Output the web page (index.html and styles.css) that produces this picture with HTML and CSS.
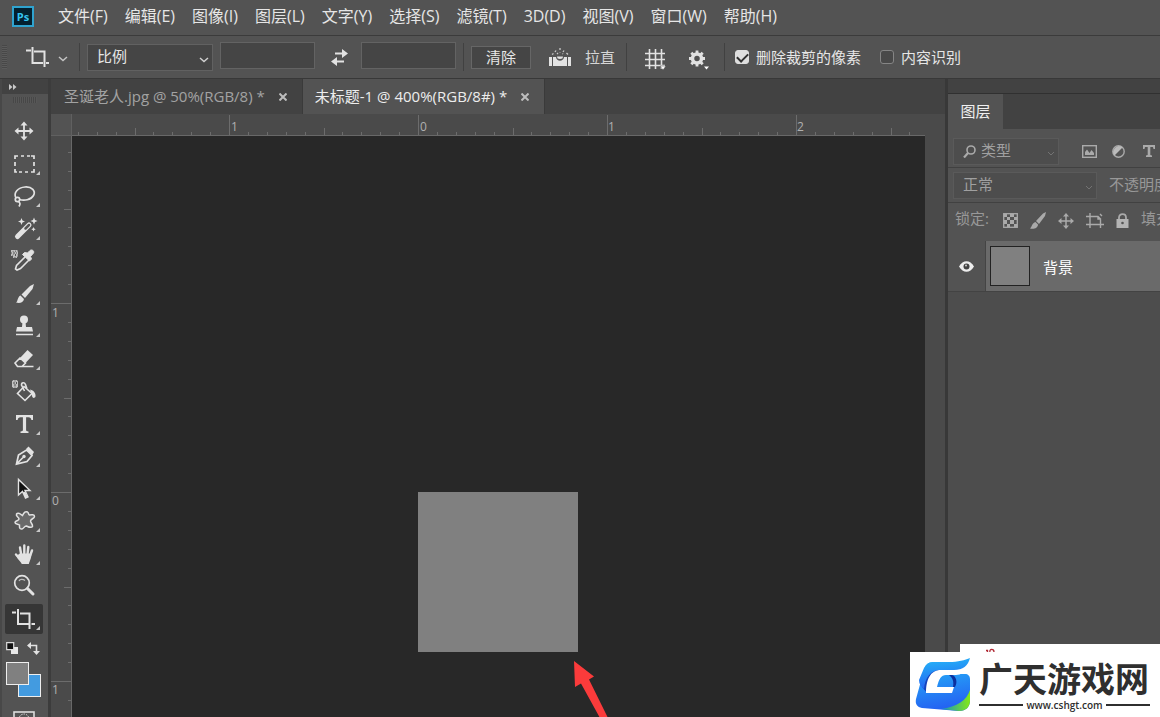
FILE: index.html
```html
<!DOCTYPE html>
<html lang="zh-CN">
<head>
<meta charset="utf-8">
<meta name="viewport" content="width=device-width, initial-scale=1">
<title>未标题-1</title>
<link rel="stylesheet" href="styles.css">
</head>
<body>
<header class="menubar">
  <svg class="app-logo" width="22" height="21" viewBox="0 0 22 21"><rect x="1" y="1" width="20" height="19" fill="#04202f" stroke="#2fa3cf" stroke-width="2"/><text x="11" y="15" text-anchor="middle" class="app-logo-text">Ps</text></svg>
  <nav class="menu">
    <a href="#">文件(F)</a><a href="#">编辑(E)</a><a href="#">图像(I)</a><a href="#">图层(L)</a><a href="#">文字(Y)</a><a href="#">选择(S)</a><a href="#">滤镜(T)</a><a href="#">3D(D)</a><a href="#">视图(V)</a><a href="#">窗口(W)</a><a href="#">帮助(H)</a>
  </nav>
</header>

<section class="options">
  <span class="grip"></span>
  <button class="opt-tool" aria-label="裁剪工具">
    <svg width="42" height="24" viewBox="0 0 42 24"><g fill="none" stroke="#e2e2e2" stroke-width="2"><path d="M0 5.500H5M6.500 2V18H17M8 6.500H18.500V22M20 18H23"/></g><path d="M33 12l4 3.500 4-3.500" fill="none" stroke="#c4c4c4" stroke-width="1.500"/></svg>
  </button>
  <span class="divider"></span>
  <span class="select ratio"><select aria-label="比例"><option>比例</option></select>
    <svg class="chevron" width="10" height="6" viewBox="0 0 10 6"><path d="M1 1l4 3.500L9 1" fill="none" stroke="#d0d0d0" stroke-width="1.500"/></svg></span>
  <input class="field" type="text" aria-label="宽度">
  <button class="swap" aria-label="互换"><svg width="17" height="17" viewBox="0 0 17 17"><g fill="#e2e2e2"><path d="M4 3.500h7V0l6 4.500L11 9V5.500H4z"/><path d="M13 11.500H6V8l-6 4.500L6 17v-3.500h7z"/></g></svg></button>
  <input class="field" type="text" aria-label="高度">
  <span class="divider"></span>
  <button class="clear">清除</button>
  <button class="straighten"><svg width="22" height="19" viewBox="0 0 22 19"><path d="M0 9h3v9H0zM19 9h3v9h-3zM4 9h3c.5 5 7.500 5 8 0h3v9H4z" fill="#e2e2e2"/><path d="M8 8.500a3 2.500 0 0 0 6 0z" fill="#e2e2e2"/><path d="M3 6.500L4.500 5.500M6 4l1-1.500M11 2V0M15 2.500l-1 1.500M17.500 5L19 6.500M8 6l1-1M11 4.500V5M13.500 5.500l.5.500" stroke="#c9c9c9" stroke-width="1.300"/></svg><span>拉直</span></button>
  <span class="divider"></span>
  <button class="icon" aria-label="叠加选项"><svg width="21" height="22" viewBox="0 0 21 22"><path d="M4.500 0V20M10.500 0V20M16.500 0V20M0 4.500H20M0 10.500H20M0 16.500H20" stroke="#e2e2e2" stroke-width="1.600"/><path d="M15 17h6l-3 4z" fill="#fff" stroke="#444" stroke-width=".5"/></svg></button>
  <button class="icon gear" aria-label="设置"><svg width="20" height="20" viewBox="0 0 20 20"><circle cx="8" cy="8.500" r="4.500" fill="none" stroke="#e2e2e2" stroke-width="3.500"/><path d="M8 .5v3M8 13.500v3M0 8.500h3M13 8.500h3M2.300 2.800l2 2M11.700 12.200l2 2M2.300 14.200l2-2M11.700 4.800l2-2" stroke="#e2e2e2" stroke-width="2.800"/><path d="M15 16.500h5l-2.500 3z" fill="#fff"/></svg></button>
  <span class="divider"></span>
  <label class="check"><input type="checkbox" checked><span>删除裁剪的像素</span></label>
  <label class="check"><input type="checkbox"><span>内容识别</span></label>
</section>

<main class="workspace">
  <aside class="toolbox">
    <button class="expand" aria-label="展开"><svg width="8" height="6" viewBox="0 0 8 6"><path d="M0 0l3.500 3L0 6zM4 0l3.500 3L4 6z" fill="#c9c9c9"/></svg></button>
    <div class="tool-grip"></div>
    <div class="tools">
      <button aria-label="移动"><svg viewBox="0 0 38 30"><path d="M19 8v14M12 15h14" stroke="#e2e2e2" stroke-width="1.800"/><path d="M19 5.500l3.500 4h-7zM19 24.500l3.500-4h-7zM9.500 15l4-3.500v7zM28.500 15l-4-3.500v7z" fill="#e2e2e2"/></svg></button>
      <button aria-label="矩形选框"><svg viewBox="0 0 38 30"><path d="M10 10V7h3M16 7h3M22 7h3M26 7h3v3M29 13v4M29 20v3h-3M23 23h-3M17 23h-3M12 23h-2v-3M10 17v-4" fill="none" stroke="#e2e2e2" stroke-width="1.700"/><path class="more" d="M35 22v4h-4z"/></svg></button>
      <button aria-label="套索"><svg viewBox="0 0 38 30"><g fill="none" stroke="#e2e2e2" stroke-width="1.700"><path d="M11 17C8 12 13 6.500 20 6c7-.5 11 4 8.500 8.500C26 19 19 20 14.500 18.500"/><circle cx="12.500" cy="18.500" r="2.200"/><path d="M13 20.500c3 1 2 3 1 5"/></g><path class="more" d="M35 22v4h-4z"/></svg></button>
      <button aria-label="魔棒"><svg viewBox="0 0 38 30"><path d="M12.500 22.500L24 11" stroke="#e2e2e2" stroke-width="5" stroke-linecap="round"/><path d="M20.500 14.500L24 11" stroke="#555" stroke-width="2.500" stroke-linecap="round"/><path d="M16.500 4l1 2.500 2.500 1-2.500 1-1 2.500-1-2.500-2.500-1 2.500-1zM29 3.500l1 2.500 2.500 1-2.500 1-1 2.500-1-2.500-2.500-1 2.500-1zM28.500 13l.7 1.500 1.500.7-1.500.7-.7 1.500-.7-1.500-1.500-.7 1.500-.7z" fill="#e2e2e2"/><path class="more" d="M35 22v4h-4z"/></svg></button>
      <button aria-label="吸管"><svg viewBox="0 0 38 30"><path d="M20 11l-8.500 8.500-1 3.500 1.500 1 3.500-1.500L24 14" fill="none" stroke="#e2e2e2" stroke-width="1.600"/><path d="M17.500 8.500l2-2 3 .5L25 4.500c2-1.500 4.500.5 3.500 2.500l-3 3.500 1 2.500-2 2z" fill="#e2e2e2" stroke="#e2e2e2"/><path class="checker" d="M6 5h7M7 7h6M6 9h7M8 11h5"/><path d="M7 4.500l5 .5v6l-3-.5-2-3z" class="checker-edge"/></svg></button>
      <button aria-label="画笔"><svg viewBox="0 0 38 30"><path d="M29 5l-1.500 5-7.500 9-3.500-3.500L25 7z" fill="#e2e2e2"/><path d="M15.500 16.500l3.500 3.500c-.5 4-5 4.500-8 3.500 2-1 1.500-6 4.500-7z" fill="#e2e2e2"/><path class="more" d="M35 22v4h-4z"/></svg></button>
      <button aria-label="仿制图章"><svg viewBox="0 0 38 30"><circle cx="19" cy="8.500" r="4" fill="#e2e2e2"/><path d="M17.500 11h3l.5 5h6l1 4.500H11l1-4.500h5z" fill="#e2e2e2"/><path d="M11 23.500h17" stroke="#e2e2e2" stroke-width="1.500"/><path class="more" d="M35 22v4h-4z"/></svg></button>
      <button aria-label="橡皮擦"><svg viewBox="0 0 38 30"><path d="M15 14l7.500-8 5.500 5-7.500 8z" fill="#e2e2e2"/><path d="M15 14l-5 5 2.500 3.500H17l3.500-3.500zM17 22.500h11.500" fill="none" stroke="#e2e2e2" stroke-width="1.600"/><path class="more" d="M35 22v4h-4z"/></svg></button>
      <button aria-label="油漆桶"><svg viewBox="0 0 38 30"><path d="M19 10.500l8 7-7 7-7.500-7zM19.500 15l-3-6c0-3 3-3 4-.5l1.500 4.500" fill="none" stroke="#e2e2e2" stroke-width="1.600"/><path d="M25 13.500c4 1 6 4 5.500 7-1 2.500-3.500 1.500-3.500-1z" fill="#e2e2e2"/><path class="checker" d="M8 5h5M7 7h6M8 9h5M8 11h5"/><path d="M7.500 5h5v6h-5z" class="checker-edge"/></svg></button>
      <button aria-label="文字"><svg viewBox="0 0 38 30"><path d="M11 6h17v5h-1.600c-.4-2-1-2.800-3-2.800h-2.300v12.600c0 1.300.5 1.500 2.400 1.700V24h-8v-1.500c1.900-.2 2.400-.4 2.400-1.700V8.200h-2.300c-2 0-2.600.8-3 2.800H11z" fill="#e2e2e2"/><path class="more" d="M35 22v4h-4z"/></svg></button>
      <button aria-label="钢笔"><svg viewBox="0 0 38 30"><path d="M11.500 23l2-9 8-5 5.500 5.500-5 6zM12 22.500l6-6" fill="none" stroke="#e2e2e2" stroke-width="1.700"/><circle cx="19" cy="15.500" r="1.700" fill="#e2e2e2"/><path d="M21 8l2.500-2.500L29 11l-2 3.500z" fill="#e2e2e2"/><path class="more" d="M35 22v4h-4z"/></svg></button>
      <button aria-label="路径选择"><svg viewBox="0 0 38 30"><path d="M13.500 5.500v15.500l4-3.500 3 6.500 2.500-1.200-3-6.300h5z" fill="#111" stroke="#e2e2e2" stroke-width="1.400"/><path d="M19 18l2.500 5" stroke="#e2e2e2" stroke-width="2.500"/><path class="more" d="M35 22v4h-4z"/></svg></button>
      <button aria-label="自定形状"><svg viewBox="0 0 38 30"><path d="M17.500 9.500C19 6 20.500 5 22.500 6c1.500 1 .5 2.500 2 3 2-.5 5-.5 5 1.500s-4 2.500-4 4.500 2.500 3 2 5.500c-1.500 2-4 .5-6-.5-2-.5-2.500 2.500-4.500 3-3 .5-2.500-2.500-2.500-4-1.500-1-4.500-.5-4.500-2.500s4-1.500 4-3.500-3.500-2.500-2.500-5c1.500-2 4 0 6 1.500z" fill="#6a6a6a" stroke="#e2e2e2" stroke-width="1.500"/><path class="more" d="M35 22v4h-4z"/></svg></button>
      <button aria-label="抓手"><svg viewBox="0 0 38 30"><path d="M16.300 16L15 8.500M19.300 15V6.500M22.500 15.500l.8-7.500M25 17l2-5.500M14.500 19.500L11 15.500" stroke="#e2e2e2" stroke-width="2.400" stroke-linecap="round"/><path d="M14.800 14.500h9.500l2 .5c0 5-1.500 6.500-2.500 10h-7c-1-2.500-4-4.500-5.500-8z" fill="#e2e2e2"/><path class="more" d="M35 22v4h-4z"/></svg></button>
      <button aria-label="缩放"><svg viewBox="0 0 38 30"><circle cx="17" cy="12" r="7.300" fill="none" stroke="#e2e2e2" stroke-width="1.700"/><path d="M14 10c1-2 4-2 6-.5" fill="none" stroke="#bbb" stroke-width="1.300"/><path d="M22.500 17.500l5.500 5.500" stroke="#e2e2e2" stroke-width="3" stroke-linecap="round"/></svg></button>
      <button class="active" aria-label="裁剪"><svg viewBox="0 0 38 30"><path d="M7 8.500h4M13 5v15h11M15 9.500h9.500V25M26.500 20H30" fill="none" stroke="#e2e2e2" stroke-width="2"/><path class="more" d="M35 22v4h-4z"/></svg></button>
    </div>
    <div class="color-actions">
      <button aria-label="默认颜色"><svg width="13" height="13" viewBox="0 0 13 13"><path d="M5 5h7v7H5z" fill="#e8e8e8"/><path d="M.7.7h7v7h-7z" fill="#111" stroke="#ddd" stroke-width="1.200"/></svg></button>
      <button aria-label="切换颜色"><svg width="13" height="13" viewBox="0 0 13 13"><path d="M3 3.500h6.500V9" fill="none" stroke="#e2e2e2" stroke-width="1.600"/><path d="M0 3.500L4 0v7zM9.500 13L6 9h7z" fill="#e2e2e2"/></svg></button>
    </div>
    <div class="swatches"><button class="swatch back" aria-label="背景色"></button><button class="swatch front" aria-label="前景色"></button></div>
    <button class="quickmask" aria-label="快速蒙版"><svg width="22" height="14" viewBox="0 0 22 14"><rect x="1" y="1" width="20" height="16" fill="none" stroke="#ddd" stroke-width="1.600"/><circle cx="11" cy="8" r="5" fill="none" stroke="#ddd" stroke-dasharray="1.500 1"/></svg></button>
  </aside>

  <section class="document">
    <div class="tabs">
      <div class="tab"><span>圣诞老人.jpg @ 50%(RGB/8) *</span><button aria-label="关闭"><svg width="8" height="8" viewBox="0 0 8 8"><path d="M.5.5l7 7M7.500.5l-7 7"/></svg></button></div>
      <div class="tab current"><span>未标题-1 @ 400%(RGB/8#) *</span><button aria-label="关闭"><svg width="8" height="8" viewBox="0 0 8 8"><path d="M.5.5l7 7M7.500.5l-7 7"/></svg></button></div>
    </div>
    <div class="stage">
      <div class="corner"></div>
      <svg class="ruler-top" width="100%" height="22">
        <defs><pattern id="tx" x="157" y="0" width="189" height="22" patternUnits="userSpaceOnUse"><path d="M.5 1V22M19.500 18V22M38.500 18V22M57.500 18V22M76.500 18V22M95.500 14V22M113.500 18V22M132.500 18V22M151.500 18V22M170.500 18V22" stroke="#6c6c6c"/></pattern></defs>
        <rect width="100%" height="22" fill="url(#tx)"/>
        <text x="159" y="17">1</text><text x="348" y="17">0</text><text x="536" y="17">1</text><text x="725" y="17">2</text>
      </svg>
      <div class="gutter-top"></div>
      <svg class="ruler-left" width="21" height="100%">
        <defs><pattern id="ty" x="0" y="167" width="21" height="189" patternUnits="userSpaceOnUse"><path d="M0 .5H21M17 19.500H21M17 38.500H21M17 57.500H21M17 76.500H21M13 95.500H21M17 113.500H21M17 132.500H21M17 151.500H21M17 170.500H21" stroke="#6c6c6c"/></pattern></defs>
        <rect width="21" height="100%" fill="url(#ty)"/>
        <text x="1" y="181">1</text><text x="1" y="369">0</text><text x="1" y="558">1</text>
      </svg>
      <div class="canvas">
        <div class="artboard"></div>
        <svg class="pointer" width="36" height="57" viewBox="0 0 36 57"><path d="M0 0l20 15.500-5 3L34 57h-8L7 22.500 1 26z" fill="#fb3b3b"/></svg>
      </div>
      <div class="gutter"></div>
    </div>
  </section>

  <aside class="panel">
    <div class="panel-top"></div>
    <div class="panel-tabs"><button class="panel-tab">图层</button></div>
    <div class="row filter">
      <span class="select kind"><svg class="search" width="13" height="13" viewBox="0 0 13 13"><circle cx="8" cy="5" r="4" fill="none" stroke="#aaa" stroke-width="1.600"/><path d="M5 8l-4 4.500" stroke="#aaa" stroke-width="2.200"/></svg><select aria-label="类型"><option>类型</option></select>
        <svg class="chevron" width="8" height="5" viewBox="0 0 8 5"><path d="M1 1l3 3 3-3" fill="none" stroke="#737373"/></svg></span>
      <button aria-label="像素图层"><svg width="15" height="13" viewBox="0 0 15 13"><rect x=".7" y=".7" width="13.600" height="11.600" fill="none" stroke="#aaa" stroke-width="1.400"/><path d="M3 10V7l2-2.500L7.500 8 9.500 5 12 8v2z" fill="#aaa"/></svg></button>
      <button aria-label="调整图层"><svg width="13" height="13" viewBox="0 0 13 13"><circle cx="6.500" cy="6.500" r="5.700" fill="none" stroke="#aaa" stroke-width="1.400"/><path d="M10.500 2.500a5.700 5.700 0 0 0-8 8z" fill="#bbb"/></svg></button>
      <button aria-label="文字图层"><svg width="12" height="12" viewBox="0 0 12 12"><path d="M0 0h12v4h-1.500L10 2H7.300v8l1.700.5V12H3v-1.500l1.700-.5V2H2l-.5 2H0z" fill="#aaa"/></svg></button>
    </div>
    <div class="row blend">
      <span class="select mode"><select aria-label="混合模式"><option>正常</option></select>
        <svg class="chevron" width="8" height="5" viewBox="0 0 8 5"><path d="M1 1l3 3 3-3" fill="none" stroke="#737373"/></svg></span>
      <span class="dim">不透明度</span>
    </div>
    <div class="row lock">
      <span class="dim">锁定:</span>
      <div class="locks">
      <button aria-label="锁定透明像素"><svg width="15" height="15" viewBox="0 0 15 15"><rect x=".7" y=".7" width="13.600" height="13.600" fill="none" stroke="#aaa" stroke-width="1.300"/><path d="M1 1h3v3H1zM7 1h4v3H7zM4 4h3v3H4zM11 4h3v3h-3zM1 7h3v4H1zM7 7h4v4H7zM4 11h3v3H4zM11 11h3v3h-3z" fill="#aaa"/></svg></button>
      <button aria-label="锁定图像像素"><svg width="16" height="17" viewBox="0 0 16 17"><path d="M16 0l-1 4-6 8-3-3 7-7.500zM5.500 10L8 12.500C8 16 4 17.500 0 16.500 2 15 2 11 5.500 10z" fill="#aaa"/></svg></button>
      <button aria-label="锁定位置"><svg width="16" height="16" viewBox="0 0 16 16"><path d="M8 2v12M2 8h12" stroke="#aaa" stroke-width="1.500"/><path d="M8 0l3 3.500H5zM8 16l3-3.500H5zM0 8l3.500-3v6zM16 8l-3.500-3v6z" fill="#aaa"/></svg></button>
      <button aria-label="锁定画板"><svg width="18" height="15" viewBox="0 0 18 15"><path d="M0 3.500h12l3 3M4 0v15M0 11.500h18M14.500 6v9M12 3.500V6h2.500M14 1l2 2" fill="none" stroke="#aaa" stroke-width="1.400"/></svg></button>
      <button aria-label="锁定全部"><svg width="13" height="15" viewBox="0 0 13 15"><path d="M3 7V4.500C3 0 10 0 10 4.500V7" fill="none" stroke="#aaa" stroke-width="1.800"/><path d="M.5 6h12v9H.5z" fill="#b4b4b4"/><circle cx="6.500" cy="10" r="1.300" fill="#555"/></svg></button>
      </div>
      <span class="dim">填充</span>
    </div>
    <div class="layer">
      <button class="eye" aria-label="可见性"><svg width="15" height="11" viewBox="0 0 15 11"><path d="M0 5.500C4-1.500 11-1.500 15 5.500 11 12.500 4 12.500 0 5.500z" fill="#eee"/><circle cx="7.500" cy="5.500" r="3" fill="#444"/><circle cx="7" cy="4.500" r="1" fill="#ccc"/></svg></button>
      <div class="layer-body"><span class="thumb"></span><span>背景</span></div>
    </div>
  </aside>
</main>

<footer class="watermark">
  <svg class="brand-strip" viewBox="0 0 200 8" width="200" height="8"><path d="M0 0h200v8H0z" fill="#fff"/><path d="M26 6.500h1.500V8M30 8C29 4.500 34 4.500 34 8" fill="none" stroke="#b02a35" stroke-width="1.300"/></svg>
  <svg class="brand-mark" width="57" height="55" viewBox="0 0 57 55">
    <defs><linearGradient id="bl" x1="0" y1="0" x2="0.200" y2="1"><stop offset="0" stop-color="#25baf8"/><stop offset="1" stop-color="#2463f2"/></linearGradient><linearGradient id="gr" x1="0" y1="0" x2="1" y2="0"><stop offset="0" stop-color="#1591c4"/><stop offset="1" stop-color="#84ea14"/></linearGradient></defs>
    <path d="M25 5h-6c-5 0-8 3-9 8L2 42c-1 5 1 8 6 9l37 3c7 0 11-4 11-11V22c0-3-2-5-5-5H34z" fill="url(#bl)"/>
    <path d="M56 33c-3 10-13 17-29 19l18 2c7 0 11-4 11-11z" fill="url(#gr)"/>
    <path d="M31 6C19 6 8 15 8 30l5 6c1-13 4-20 14-23z" fill="#1443bd"/>
    <path d="M19 5h16c9 0 16-2 21-4-2 8-7 12-16 12H27C17 13 11 20 10 32 7 30 5 27 5 23l5-12c2-4 5-6 9-6z" fill="url(#bl)"/>
    <path d="M27 13h16c5 0 8-1 10-3-2 5-6 8-11 8H32c-5 0-7 4-9 12h17l-2 6H12c0-13 4-23 15-23z" fill="#fff"/>
    <path d="M35 18c4 3 5 7 4 12h2c3-5 1-11-3-12z" fill="#0a2f9e"/>
  </svg>
  <div class="brand"><strong>广天游戏网</strong><span class="url">www.cshgt.com</span></div>
</footer>
</body>
</html>
```
FILE: styles.css
```css
* { box-sizing: border-box; }
body {
  margin: 0;
  height: 100vh;
  display: flex;
  flex-direction: column;
  overflow: hidden;
  position: relative;
  background: #535353;
  color: #e6e6e6;
  font-family: "Open Sans", "Noto Sans CJK SC", sans-serif;
  font-size: 16px;
}
button, input, select { font: inherit; color: inherit; }
button { padding: 0; border: 0; background: none; display: flex; align-items: center; justify-content: center; }
svg { display: block; flex: none; }

.menubar { flex: none; height: 36px; display: flex; align-items: center; padding: 0 12px 3px; gap: 24px; border-bottom: 1px solid #3b3b3b; }
.app-logo-text { font: bold 11px "Open Sans", sans-serif; fill: #35c4f0; }
.menu { display: flex; gap: 17px; white-space: nowrap; }
.menu a { color: inherit; text-decoration: none; line-height: 24px; }

.options { flex: none; height: 43px; display: flex; align-items: center; white-space: nowrap; font-size: 15px; border-bottom: 1px solid #383838; }
.grip { width: 5px; height: 24px; margin: 0 19px 0 2px; background: repeating-linear-gradient(#484848 0 1px, #5b5b5b 1px 2px); }
.divider { flex: none; width: 1px; height: 28px; background: #414141; }
.opt-tool { margin-right: 11px; }
.select { position: relative; display: flex; align-items: center; border: 1px solid #616161; background: #454545; }
.select select { appearance: none; width: 100%; height: 100%; padding: 0 0 2px 9px; border: 0; background: transparent; }
.chevron { position: absolute; right: 3px; top: 50%; pointer-events: none; }
.ratio { width: 126px; height: 27px; margin: 0 7px; }
.field { width: 95px; height: 27px; border: 1px solid #636363; background: #454545; margin-bottom: 3px; }
.swap { margin: 0 13px 0 16px; }
.field + .divider { margin: 0 7px; }
.clear { width: 60px; height: 23px; padding-bottom: 2px; border: 1px solid #666; background: #454545; }
.straighten { gap: 14px; margin: 0 11px 0 18px; color: #d6d6d6; }
.straighten span, .check span { padding-bottom: 2px; }
.icon { margin: 6px 0 0 18px; }
.gear { margin: 6px 15px 0 23px; }
.check { display: flex; align-items: center; gap: 7px; margin-left: 10px; }
.check + .check { margin-left: 19px; }
.check input { appearance: none; width: 14px; height: 14px; margin: 0; border: 1px solid #858585; border-radius: 3px; background: #494949; }
.check input:checked { border-color: #dedede; background: #dedede; display: grid; place-items: center; }
.check input:checked::before { content: ""; width: 9px; height: 5px; border: solid #303030; border-width: 0 0 2px 2px; transform: translateY(-1px) rotate(-45deg); }

.workspace { flex: 1; min-height: 0; display: flex; }
.toolbox { flex: none; width: 51px; display: flex; flex-direction: column; border-left: 2px solid #484848; border-right: 3px solid #3c3c3c; overflow: hidden; }
.expand { flex: none; height: 15px; justify-content: flex-start; padding-left: 7px; background: #424242; }
.tool-grip { flex: none; width: 24px; height: 6px; margin: 3px 11px 11px; background: repeating-linear-gradient(90deg, #474747 0 1px, #575757 1px 2px); }
.tools { flex: none; height: 521px; display: flex; flex-direction: column; justify-content: space-between; padding: 2px 3px 1px; }
.tools button { width: 38px; height: 30px; border-radius: 2px; }
.tools svg { width: 38px; height: 30px; }
.tools .active { background: #363636; }
.more { fill: #c8c8c8; }
.checker { stroke: #e2e2e2; stroke-width: 1.500; stroke-dasharray: 1.500 1; fill: none; }
.checker-edge { stroke: #c4c4c4; fill: none; }
.color-actions { flex: none; display: flex; gap: 8px; padding: 7px 4px 0; }
.swatches { flex: none; display: grid; grid-template-columns: 12px 11px 12px; grid-template-rows: 12px 11px 12px; margin: 7px 4px 0; }
.swatch { border: 1px solid #eee; }
.back { grid-area: 2 / 2 / 4 / 4; background: #439be0; }
.front { grid-area: 1 / 1 / 3 / 3; background: #808080; }
.quickmask { flex: none; margin: 14px 11px 0; width: 22px; }

.document { flex: 1; min-width: 0; display: flex; flex-direction: column; }
.tabs { flex: none; height: 35px; display: flex; background: #424242; white-space: nowrap; font-size: 15px; }
.tab { display: flex; align-items: center; gap: 14px; padding: 0 15px 0 13px; color: #a2a2a2; border-right: 1px solid #3a3a3a; }
.tab span { padding-bottom: 2px; }
.tab svg { stroke: #bdbdbd; stroke-width: 2; }
.current { padding-left: 12px; background: #535353; color: #ededed; }
.stage { flex: 1; min-height: 0; display: grid; grid-template-columns: 21px minmax(0, 1fr) 20px; grid-template-rows: 22px minmax(0, 1fr); background: #4a4a4a; }
.stage text { font-size: 12px; fill: #b0b0b0; }
.corner { background: #535353; border: 1px solid #606060; border-width: 0 1px 1px 0; }
.ruler-top, .ruler-left { overflow: hidden; }
.ruler-top { border-bottom: 1px solid #686868; }
.ruler-left { border-right: 1px solid #686868; }
.canvas { position: relative; overflow: hidden; background: #282828; }
.artboard { position: absolute; left: 346px; top: 356px; width: 160px; height: 160px; background: #808080; }
.pointer { position: absolute; left: 502px; top: 525px; }

.panel { flex: none; width: 215px; display: flex; flex-direction: column; overflow: hidden; white-space: nowrap; border-left: 3px solid #383838; background: #4d4d4d; font-size: 15px; }
.panel-top { flex: none; height: 15px; background: #424242; border-bottom: 1px solid #303030; }
.panel-tabs { flex: none; height: 35px; display: flex; background: #424242; }
.panel-tab { width: 55px; padding-bottom: 2px; background: #535353; color: #f0f0f0; }
.row { flex: none; display: flex; align-items: center; padding-left: 5px; background: #535353; border-bottom: 1px solid #414141; color: #a0a0a0; }
.row > * { flex: none; }
.row .select { border-color: #5a5a5a; background: #4d4d4d; }
.filter { height: 39px; padding-top: 6px; gap: 15px; }
.kind { width: 106px; height: 27px; padding-left: 9px; margin-right: 8px; }
.filter button + button + button { margin-left: 3px; }
.kind select { padding-left: 5px; }
.blend { height: 35px; gap: 12px; }
.mode { width: 144px; height: 27px; }
.dim { padding-bottom: 3px; color: #989898; }
.lock { height: 38px; padding: 0 0 6px 7px; border-bottom: 0; }
.locks { display: flex; align-items: center; gap: 12px; margin: 3px 12px 0 14px; }
.layer { flex: none; height: 51px; display: flex; border-bottom: 1px solid #434343; }
.eye { width: 38px; border-right: 1px solid #444; background: #535353; }
.layer-body { flex: 1; display: flex; align-items: center; gap: 13px; padding-left: 4px; background: #6a6a6a; color: #fff; }
.thumb { width: 40px; height: 40px; border: 1px solid #222; background: #808080; }

.watermark { position: absolute; right: 0; bottom: 0; width: 250px; height: 65px; display: flex; gap: 8px; padding: 5px 10px 0 4px; background: #fff; color: #2f2f2f; }
.brand-strip { position: absolute; right: 0; bottom: 65px; }
.brand { flex: 1; display: flex; flex-direction: column; white-space: nowrap; }
.brand strong { font: 700 34px/41px "Noto Sans CJK SC", sans-serif; }
.url { display: flex; align-items: center; gap: 3px; font-size: 10px; font-weight: 600; line-height: 14px; }
.url::before, .url::after { content: ""; flex: 1; height: 2px; background: #2f2f2f; }
```
